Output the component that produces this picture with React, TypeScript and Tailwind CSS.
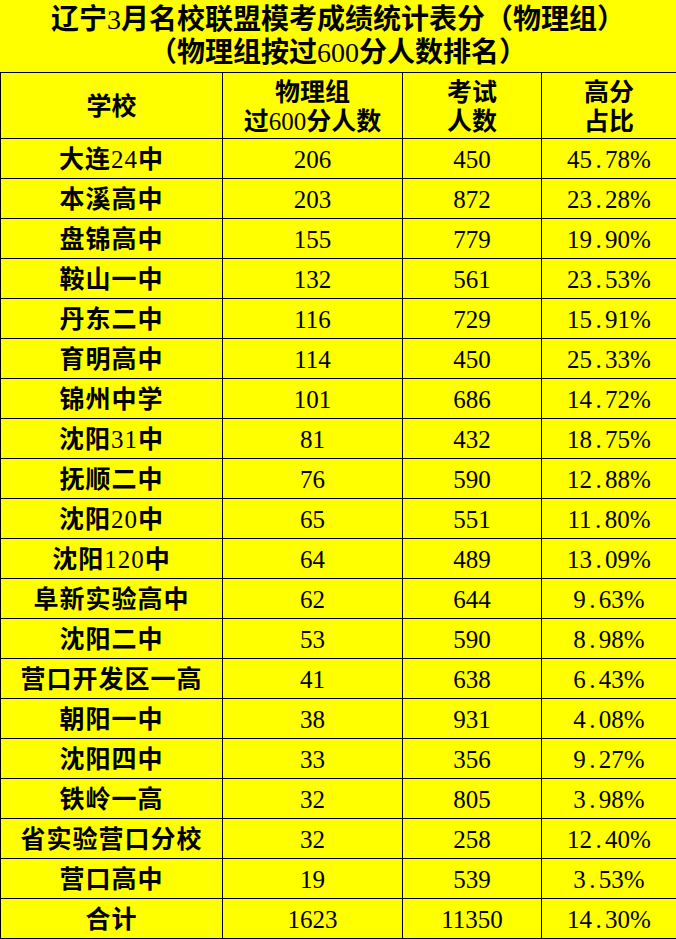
import React from "react";

const rows: [string, string, string, string][] = [
  ["大连24中", "206", "450", "45.78%"],
  ["本溪高中", "203", "872", "23.28%"],
  ["盘锦高中", "155", "779", "19.90%"],
  ["鞍山一中", "132", "561", "23.53%"],
  ["丹东二中", "116", "729", "15.91%"],
  ["育明高中", "114", "450", "25.33%"],
  ["锦州中学", "101", "686", "14.72%"],
  ["沈阳31中", "81", "432", "18.75%"],
  ["抚顺二中", "76", "590", "12.88%"],
  ["沈阳20中", "65", "551", "11.80%"],
  ["沈阳120中", "64", "489", "13.09%"],
  ["阜新实验高中", "62", "644", "9.63%"],
  ["沈阳二中", "53", "590", "8.98%"],
  ["营口开发区一高", "41", "638", "6.43%"],
  ["朝阳一中", "38", "931", "4.08%"],
  ["沈阳四中", "33", "356", "9.27%"],
  ["铁岭一高", "32", "805", "3.98%"],
  ["省实验营口分校", "32", "258", "12.40%"],
  ["营口高中", "19", "539", "3.53%"],
  ["合计", "1623", "11350", "14.30%"],
];

function T({ s }: { s: string }) {
  const parts = s.match(/[\x00-\x7f]+|[^\x00-\x7f]+/g) || [];
  return (
    <>
      {parts.map((p, i) =>
        /^[\x00-\x7f]+$/.test(p) ? (
          <span key={i} className="font-normal">
            {p}
          </span>
        ) : (
          <span key={i} className="font-bold">
            {p}
          </span>
        )
      )}
    </>
  );
}

function Pct({ v }: { v: string }) {
  const [a, b] = v.split(".");
  return (
    <span>
      {a}
      <span className="inline-block w-[13px] text-center">.</span>
      {b}
    </span>
  );
}

const cell = "border-r border-b border-black flex items-center justify-center pt-[2px]";
const head = "border-r border-b border-black flex flex-col items-center justify-center leading-[29px] pt-[2px]";

export default function App() {
  return (
    <div
      className="w-[676px] h-[939px] bg-[#ffff00] text-black overflow-hidden"
      style={{ fontFamily: "'Liberation Serif', 'Noto Sans CJK SC', serif" }}
    >
      <div className="h-[73px] border-b border-black flex flex-col items-center pt-[3px] text-[28px] leading-[33px]">
        <div>
          <T s="辽宁3月名校联盟模考成绩统计表分（物理组）" />
        </div>
        <div>
          <T s="（物理组按过600分人数排名）" />
        </div>
      </div>
      <div className="grid grid-cols-[222px_180px_139px_135px] grid-rows-[66px] auto-rows-[40px] border-l border-black text-[25px]">
        <div className={head}>
          <T s="学校" />
        </div>
        <div className={head}>
          <div>
            <T s="物理组" />
          </div>
          <div>
            <T s="过600分人数" />
          </div>
        </div>
        <div className={head}>
          <div>
            <T s="考试" />
          </div>
          <div>
            <T s="人数" />
          </div>
        </div>
        <div className={head}>
          <div>
            <T s="高分" />
          </div>
          <div>
            <T s="占比" />
          </div>
        </div>
        {rows.map((r, i) => (
          <React.Fragment key={i}>
            <div className={cell + " tracking-[1px]"}>
              <T s={r[0]} />
            </div>
            <div className={cell}>{r[1]}</div>
            <div className={cell}>{r[2]}</div>
            <div className={cell}>
              <Pct v={r[3]} />
            </div>
          </React.Fragment>
        ))}
      </div>
    </div>
  );
}
